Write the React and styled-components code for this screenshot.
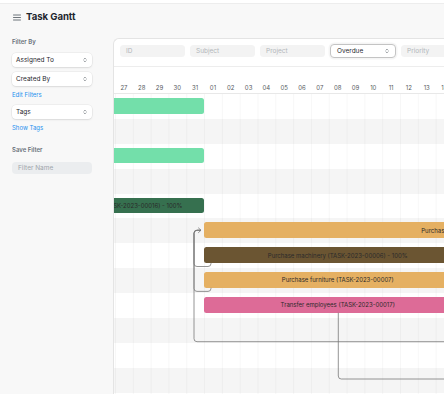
import React from 'react';
import styled, { createGlobalStyle } from 'styled-components';

const COL = 17.82;
const ROW = 24.9;
const ORIGIN = 1;

const GlobalStyle = createGlobalStyle`
  html, body { margin: 0; padding: 0; }
  body {
    background: #f8f8f8;
    font-family: Inter, "Noto Sans", sans-serif;
    color: #1f272e;
    overflow: hidden;
  }
  * { box-sizing: border-box; }
`;

const Page = styled.div`
  width: 444px;
  height: 394px;
  display: flex;
  flex-direction: column;
  overflow: hidden;
`;

const TopBar = styled.div`
  height: 4px;
  flex: none;
  background: #fff;
  border-bottom: 1px solid #ededed;
`;

const PageHead = styled.header`
  height: 26px;
  flex: none;
  display: flex;
  align-items: center;
  gap: 5.5px;
  padding-left: 12.5px;
`;

const Title = styled.h1`
  margin: 0;
  font-size: 9.6px;
  line-height: 1;
  font-weight: 700;
  letter-spacing: -0.05px;
  color: #1f272e;
`;

const Layout = styled.div`
  flex: 1;
  display: flex;
  min-height: 0;
`;

const Sidebar = styled.aside`
  width: 113px;
  flex: none;
  display: flex;
  flex-direction: column;
  padding: 8px 21px 0 12px;
`;

const SideLabel = styled.div`
  font-size: 6px;
  line-height: 8px;
  font-weight: 600;
  color: #68717a;
  margin-top: ${(p) => p.$mt || 0}px;
`;

const SideSelect = styled.div`
  height: 14px;
  margin-top: ${(p) => p.$mt || 0}px;
  background: #fff;
  border-radius: 4px;
  box-shadow: 0 0 0 0.5px rgba(0, 0, 0, 0.07), 0 1px 2px rgba(0, 0, 0, 0.09);
  display: flex;
  align-items: center;
  justify-content: space-between;
  padding: 0 5px 0 4px;
  font-size: 6.5px;
  color: #1f272e;
`;

const SideLink = styled.a`
  display: block;
  margin-top: ${(p) => p.$mt || 0}px;
  font-size: 6px;
  line-height: 8px;
  color: #2490ef;
  text-decoration: none;
`;

const SideInput = styled.div`
  height: 12px;
  margin-top: 8px;
  background: #ebedef;
  border-radius: 4px;
  display: flex;
  align-items: center;
  padding-left: 6px;
  font-size: 6.5px;
  color: #9ea5ab;
`;

const Card = styled.main`
  flex: 1;
  min-width: 0;
  margin-top: 8px;
  background: #fff;
  border-top: 1px solid #e4e4e4;
  border-left: 1px solid #e4e4e4;
  border-top-left-radius: 6px;
  display: flex;
  flex-direction: column;
  overflow: hidden;
`;

const FilterBar = styled.div`
  height: 28px;
  flex: none;
  display: flex;
  gap: 5px;
  padding: 6px 0 0 6px;
  border-bottom: 1px solid #ededed;
`;

const FilterInput = styled.div`
  width: 65px;
  flex: none;
  height: 12px;
  background: #f3f3f3;
  border-radius: 3.5px;
  display: flex;
  align-items: center;
  padding-left: 6px;
  font-size: 6.5px;
  color: #b2b6ba;
`;

const FilterSelect = styled.div`
  width: 66px;
  flex: none;
  height: 13.5px;
  margin-top: -0.7px;
  background: #fff;
  border: 0.7px solid #c4c4c4;
  border-radius: 4px;
  box-shadow: 0 0 0 1.5px rgba(0, 0, 0, 0.04);
  display: flex;
  align-items: center;
  justify-content: space-between;
  padding: 0 6px 0 6px;
  font-size: 6.5px;
  color: #1f272e;
`;

const GanttHeader = styled.div`
  height: 27px;
  flex: none;
  display: flex;
  align-items: flex-end;
  padding: 0 0 1px ${ORIGIN}px;
  border-bottom: 1px solid #e8e8e8;
`;

const DayCell = styled.div`
  width: ${COL}px;
  flex: none;
  text-align: center;
  font-size: 6px;
  line-height: 8px;
  color: #555b61;
`;

const ChartBody = styled.div`
  position: relative;
  flex: 1;
`;

const Row = styled.div`
  position: relative;
  height: ${ROW}px;
  background-color: ${(p) => (p.$odd ? '#f5f5f5' : '#ffffff')};
  background-image: linear-gradient(to right, rgba(0, 0, 0, 0.03) 0.6px, transparent 0.6px);
  background-size: ${COL}px 100%;
  background-position: ${ORIGIN}px 0;
`;

const Bar = styled.div`
  position: absolute;
  top: 4px;
  height: 15.5px;
  border-radius: 2.5px;
  background: ${(p) => p.$color};
  display: flex;
  align-items: center;
  justify-content: center;
  white-space: nowrap;
  font-size: 6px;
  color: #2a2a2a;
`;

const Arrows = styled.svg`
  position: absolute;
  left: 0;
  top: 0;
  width: 400px;
  height: 340px;
  pointer-events: none;
  overflow: visible;
`;

const SortIcon = () => (
  <svg width="4" height="6" viewBox="0 0 4 6">
    <path d="M0.9 2.2 L2 1.1 L3.1 2.2 M0.9 3.8 L2 4.9 L3.1 3.8" fill="none" stroke="#5a6168" strokeWidth="0.6" strokeLinecap="round" strokeLinejoin="round" />
  </svg>
);

const MenuIcon = () => (
  <svg width="8" height="7" viewBox="0 0 8 7">
    <path d="M0.5 1 H7.5 M0.5 3.5 H7.5 M0.5 6 H7.5" stroke="#5f666d" strokeWidth="0.9" strokeLinecap="round" />
  </svg>
);

const days = ['27', '28', '29', '30', '31', '01', '02', '03', '04', '05', '06', '07', '08', '09', '10', '11', '12', '13', '14'];

const MINT = '#73dfaa';
const DARKGREEN = '#36704f';
const ORANGE = '#e5b062';
const BROWN = '#6b5532';
const PINK = '#dd6b97';

const rows = [
  [{ id: 'a', start: -30, span: 35, color: MINT, label: '' }],
  [],
  [{ id: 'b', start: -30, span: 35, color: MINT, label: '' }],
  [],
  [{ id: 'c', start: -5.28, span: 10.28, color: DARKGREEN, label: 'Setup office network (TASK-2023-00016) - 100%' }],
  [{ id: 'd', start: 5, span: 31, color: ORANGE, label: 'Purchase equipment (TASK-2023-00005)' }],
  [{ id: 'e', start: 5, span: 15, color: BROWN, label: 'Purchase machinery (TASK-2023-00006) - 100%' }],
  [{ id: 'f', start: 5, span: 15, color: ORANGE, label: 'Purchase furniture (TASK-2023-00007)' }],
  [{ id: 'g', start: 5, span: 15, color: PINK, label: 'Transfer employees (TASK-2023-00017)' }],
  [],
  [],
  [],
  [],
];

const childY = 5 * ROW + 4 + 7.75;
const up = `V ${childY + 3} a3 3 0 0 1 3 -3 H 87`;
const arrowHead = `M 84.2 ${childY - 2.6} L 87 ${childY} L 84.2 ${childY + 2.6}`;
const brownBottom = 6 * ROW + 4 + 15.5;
const furnBottom = 7 * ROW + 4 + 15.5;
const pinkBottom = 8 * ROW + 4 + 15.5;

const paths = [
  `M 97 ${brownBottom} V ${brownBottom + 0.6} a3 3 0 0 1 -3 3 H 83 a3 3 0 0 1 -3 -3 ${up}`,
  `M 97 ${furnBottom} V ${furnBottom + 0.6} a3 3 0 0 1 -3 3 H 83 a3 3 0 0 1 -3 -3 ${up}`,
  `M 400 238 V 244.7 a3 3 0 0 1 -3 3 H 83 a3 3 0 0 1 -3 -3 ${up}`,
  `M 224.3 ${pinkBottom} V 282 a3 3 0 0 0 3 3 H 400`,
];

export default function App() {
  return (
    <Page>
      <GlobalStyle />
      <TopBar />
      <PageHead>
        <MenuIcon />
        <Title>Task Gantt</Title>
      </PageHead>
      <Layout>
        <Sidebar>
          <SideLabel>Filter By</SideLabel>
          <SideSelect $mt={7}>
            <span>Assigned To</span>
            <SortIcon />
          </SideSelect>
          <SideSelect $mt={5}>
            <span>Created By</span>
            <SortIcon />
          </SideSelect>
          <SideLink $mt={5}>Edit Filters</SideLink>
          <SideSelect $mt={6}>
            <span>Tags</span>
            <SortIcon />
          </SideSelect>
          <SideLink $mt={5}>Show Tags</SideLink>
          <SideLabel $mt={14}>Save Filter</SideLabel>
          <SideInput>Filter Name</SideInput>
        </Sidebar>
        <Card>
          <FilterBar>
            <FilterInput>ID</FilterInput>
            <FilterInput>Subject</FilterInput>
            <FilterInput>Project</FilterInput>
            <FilterSelect>
              <span>Overdue</span>
              <SortIcon />
            </FilterSelect>
            <FilterInput>Priority</FilterInput>
          </FilterBar>
          <GanttHeader>
            {days.map((d) => (
              <DayCell key={d}>{d}</DayCell>
            ))}
          </GanttHeader>
          <ChartBody>
            {rows.map((bars, i) => (
              <Row key={i} $odd={i % 2 === 1}>
                {bars.map((b) => (
                  <Bar
                    key={b.id}
                    $color={b.color}
                    style={{ left: ORIGIN + b.start * COL, width: b.span * COL }}
                  >
                    {b.label}
                  </Bar>
                ))}
              </Row>
            ))}
            <Arrows viewBox="0 0 400 340">
              {paths.map((d, i) => (
                <path key={i} d={d} fill="none" stroke="#7a7a7a" strokeWidth="0.8" />
              ))}
              <path d={arrowHead} fill="none" stroke="#7a7a7a" strokeWidth="0.8" />
            </Arrows>
          </ChartBody>
        </Card>
      </Layout>
    </Page>
  );
}
